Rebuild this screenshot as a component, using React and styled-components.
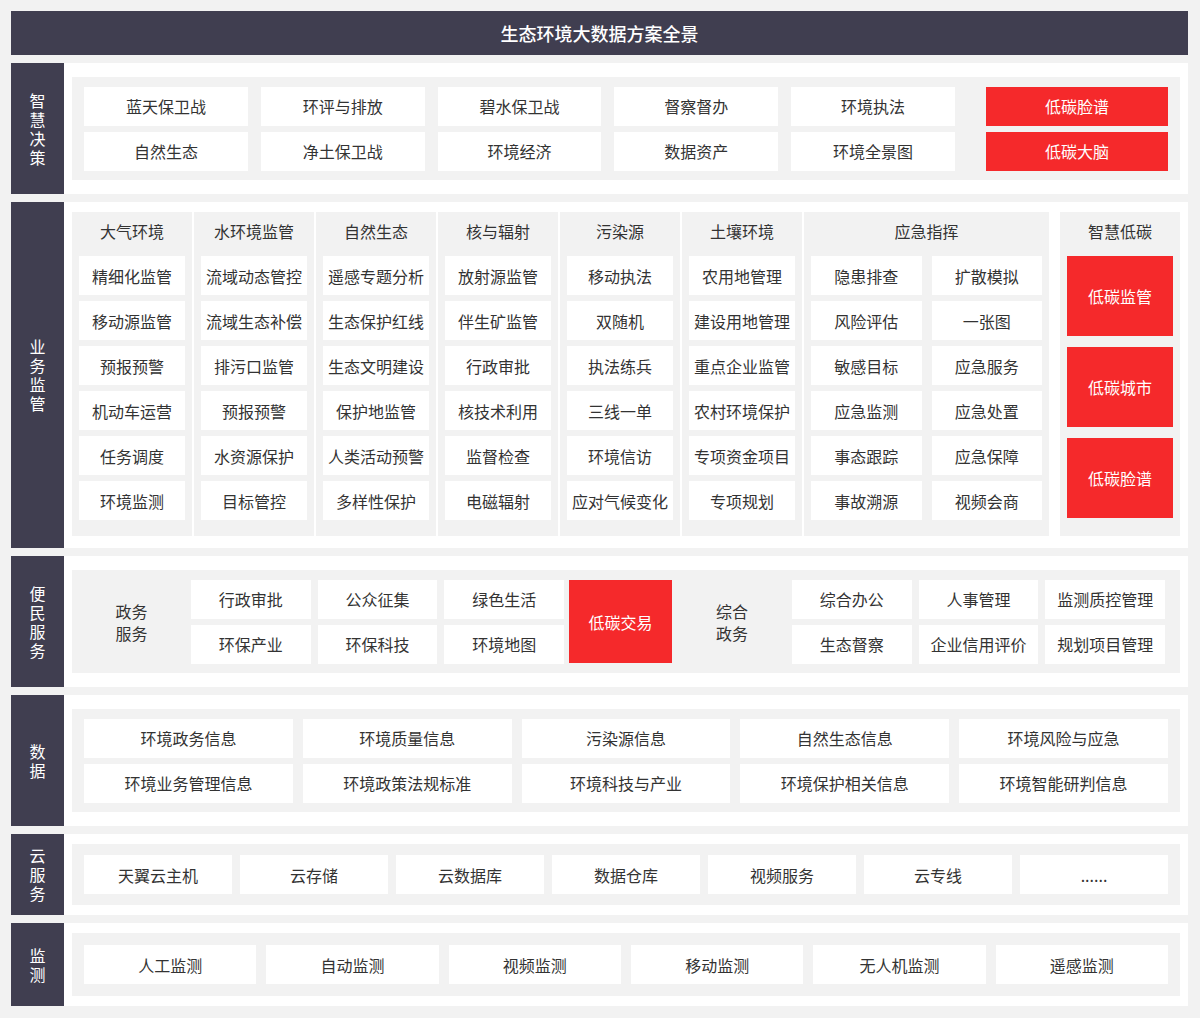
import React from "react";
import styled, { createGlobalStyle } from "styled-components";

const G = createGlobalStyle`
  body{margin:0;background:#f2f2f2;font-family:"Noto Sans CJK SC","Noto Sans",sans-serif;color:#333;}
`;
const Page = styled.div`width:1200px;padding:11px 12px 12px 11px;box-sizing:border-box;display:flex;flex-direction:column;gap:8px;`;
const Title = styled.div`height:44px;background:#403e50;color:#fff;font-size:18px;font-weight:500;display:flex;align-items:center;justify-content:center;`;
const Row = styled.div`display:flex;height:${p => p.h}px;`;
const Label = styled.div`width:53px;flex:none;background:#403e50;color:#fff;font-size:16px;line-height:19px;display:flex;align-items:center;justify-content:center;text-align:center;
  span{width:16px;word-break:break-all;}`;
const Panel = styled.div`flex:1;background:#fff;padding:${p => p.pad || "14px 8px"};display:flex;`;
const Gray = styled.div`flex:1;background:#f2f2f2;padding:${p => p.pad || "10px 12px"};display:grid;grid-template-columns:${p => p.tpl || `repeat(${p.cols},1fr)`};column-gap:${p => p.gap}px;row-gap:6px;align-content:center;`;
const Box = styled.div`height:39px;background:${p => p.red ? "#f5292b" : "#fff"};color:${p => p.red ? "#fff" : "#333"};display:flex;align-items:center;justify-content:center;font-size:16px;white-space:nowrap;`;
const WideRed = styled(Box)`margin-left:18px;`;
const Cols = styled.div`flex:1;display:flex;gap:2px;`;
const Col = styled.div`flex:${p => p.grow ? "1 1 0" : "none"};width:${p => p.w || 120}px;box-sizing:border-box;margin-left:${p => p.ml || 0}px;background:#f2f2f2;padding:0 7px 9px;display:grid;grid-template-columns:repeat(${p => p.c || 1},1fr);column-gap:10px;row-gap:6px;align-content:start;`;
const Head = styled.div`grid-column:1 / -1;height:38px;display:flex;align-items:center;justify-content:center;font-size:16px;`;
const TallBox = styled(Box)`height:80px;margin-bottom:5px;`;
const Sub = styled.div`display:flex;align-items:center;justify-content:center;text-align:center;font-size:16px;line-height:22px;width:${p => p.w}px;flex:none;`;
const Grid = styled.div`display:grid;grid-template-columns:repeat(3,1fr);gap:6px 7px;${p => p.w ? `width:${p.w}px;flex:none;` : "flex:1;"}`;
const RedBig = styled.div`width:103px;flex:none;align-self:stretch;background:#f5292b;color:#fff;display:flex;align-items:center;justify-content:center;font-size:16px;margin-left:5px;`;
const Flat = styled.div`flex:1;background:#f2f2f2;display:flex;align-items:center;padding:10px 15px 10px 0;`;

const L = ({ t }) => <Label><span>{t}</span></Label>;

const bizCols = [
  ["大气环境", ["精细化监管","移动源监管","预报预警","机动车运营","任务调度","环境监测"]],
  ["水环境监管", ["流域动态管控","流域生态补偿","排污口监管","预报预警","水资源保护","目标管控"]],
  ["自然生态", ["遥感专题分析","生态保护红线","生态文明建设","保护地监管","人类活动预警","多样性保护"]],
  ["核与辐射", ["放射源监管","伴生矿监管","行政审批","核技术利用","监督检查","电磁辐射"]],
  ["污染源", ["移动执法","双随机","执法练兵","三线一单","环境信访","应对气候变化"]],
  ["土壤环境", ["农用地管理","建设用地管理","重点企业监管","农村环境保护","专项资金项目","专项规划"]],
];
const emerg = ["隐患排查","扩散模拟","风险评估","一张图","敏感目标","应急服务","应急监测","应急处置","事态跟踪","应急保障","事故溯源","视频会商"];

export default function App() {
  return (
    <Page>
      <G />
      <Title>生态环境大数据方案全景</Title>
      <Row h={131}>
        <L t="智慧决策" />
        <Panel>
          <Gray tpl="repeat(5,1fr) 200px" gap={13}>
            {["蓝天保卫战","环评与排放","碧水保卫战","督察督办","环境执法"].map(t => <Box key={t}>{t}</Box>)}
            <WideRed red>低碳脸谱</WideRed>
            {["自然生态","净土保卫战","环境经济","数据资产","环境全景图"].map(t => <Box key={t}>{t}</Box>)}
            <WideRed red>低碳大脑</WideRed>
          </Gray>
        </Panel>
      </Row>
      <Row h={346}>
        <L t="业务监管" />
        <Panel pad="10px 8px 12px">
          <Cols>
            {bizCols.map(([h, items]) => (
              <Col key={h}><Head>{h}</Head>{items.map(t => <Box key={t}>{t}</Box>)}</Col>
            ))}
            <Col grow c={2}><Head>应急指挥</Head>{emerg.map(t => <Box key={t}>{t}</Box>)}</Col>
            <Col ml={9}><Head>智慧低碳</Head>
              {["低碳监管","低碳城市","低碳脸谱"].map(t => <TallBox red key={t}>{t}</TallBox>)}
            </Col>
          </Cols>
        </Panel>
      </Row>
      <Row h={131}>
        <L t="便民服务" />
        <Panel>
          <Flat>
            <Sub w={119}>政务<br />服务</Sub>
            <Grid w={373}>
              {["行政审批","公众征集","绿色生活","环保产业","环保科技","环境地图"].map(t => <Box key={t}>{t}</Box>)}
            </Grid>
            <RedBig>低碳交易</RedBig>
            <Sub w={120}>综合<br />政务</Sub>
            <Grid>
              {["综合办公","人事管理","监测质控管理","生态督察","企业信用评价","规划项目管理"].map(t => <Box key={t}>{t}</Box>)}
            </Grid>
          </Flat>
        </Panel>
      </Row>
      <Row h={131}>
        <L t="数据" />
        <Panel>
          <Gray cols={5} gap={10}>
            {["环境政务信息","环境质量信息","污染源信息","自然生态信息","环境风险与应急","环境业务管理信息","环境政策法规标准","环境科技与产业","环境保护相关信息","环境智能研判信息"].map(t => <Box key={t}>{t}</Box>)}
          </Gray>
        </Panel>
      </Row>
      <Row h={81}>
        <L t="云服务" />
        <Panel pad="10px 8px">
          <Gray cols={7} gap={8}>
            {["天翼云主机","云存储","云数据库","数据仓库","视频服务","云专线","......"].map(t => <Box key={t}>{t}</Box>)}
          </Gray>
        </Panel>
      </Row>
      <Row h={83}>
        <L t="监测" />
        <Panel pad="10px 8px">
          <Gray cols={6} gap={10}>
            {["人工监测","自动监测","视频监测","移动监测","无人机监测","遥感监测"].map(t => <Box key={t}>{t}</Box>)}
          </Gray>
        </Panel>
      </Row>
    </Page>
  );
}
